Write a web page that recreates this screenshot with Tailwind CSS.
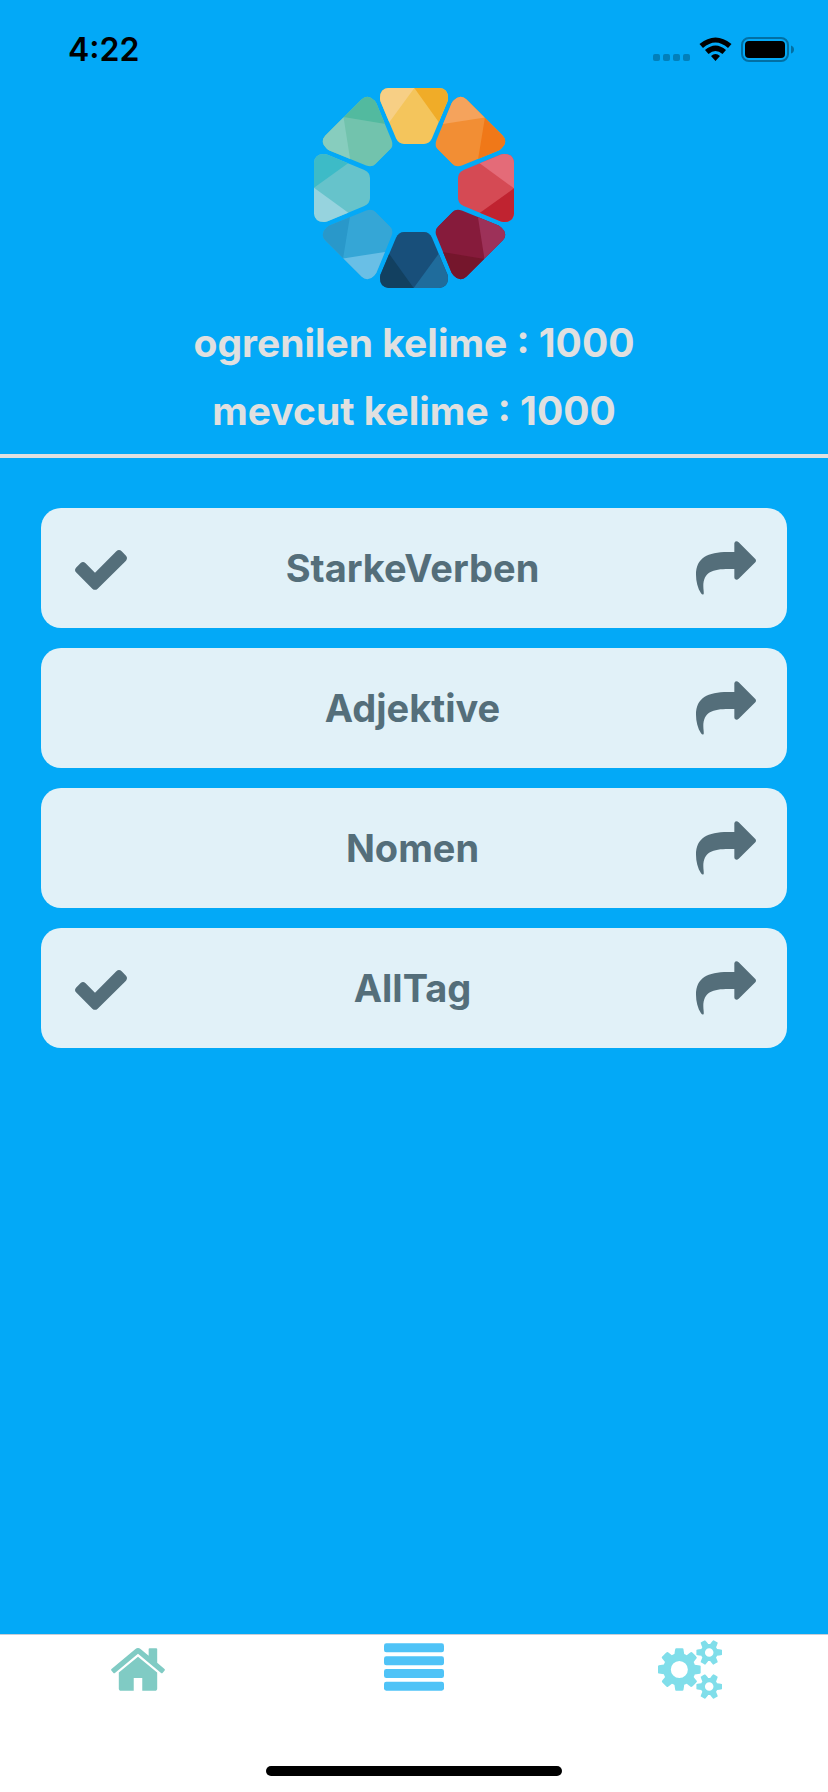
<!DOCTYPE html>
<html lang="tr">
<head>
<meta charset="utf-8">
<meta name="viewport" content="width=device-width, initial-scale=1">
<title>Kelime</title>
<script src="https://cdn.jsdelivr.net/npm/@tailwindcss/browser@4"></script>
</head>
<body class="flex min-h-screen flex-col bg-[#03a9f7] font-['Inter',sans-serif]">
<svg class="hidden" aria-hidden="true">
  <symbol id="check" viewBox="0 0 156 120"><path d="M60 68L124 4Q132-4 140 4L153 17Q159 24 153 32L68 116Q60 123 52 116L3 67Q-3 60 3 53L17 39Q24 33 31 39Z"/></symbol>
  <symbol id="share" viewBox="0 0 180 160"><path d="M115 32V6Q116 0 121 0Q125 0 128 3L178 53Q182 58 178 63L128 112Q122 118 117 113Q115 111 115 108V83H98C50 83 22 92 22 135C22 145 24 152 23 158Q20 162 15 156C5 140 0 120 0 100C0 50 35 32 95 32Z"/></symbol>
</svg>

<div class="flex h-22 items-center justify-between pr-8 pl-17">
  <time class="mt-3 text-[32px] leading-6 font-semibold text-black">4:22</time>
  <svg class="mt-3 h-7 w-36" viewBox="0 0 144 28" aria-hidden="true">
    <g fill="#027fba"><rect x="1" y="18" width="7" height="7" rx="2"/><rect x="11" y="18" width="7" height="7" rx="2"/><rect x="21" y="18" width="7" height="7" rx="2"/><rect x="31" y="18" width="7" height="7" rx="2"/></g>
    <path d="M47.500 8Q63.500-5 79.500 8L76 12Q63.500 1 51 12ZM53 14Q63.500 5 74 14L70.500 18Q63.500 12 56.500 18ZM59 20Q63.500 16 68 20L63.500 25Z"/>
    <rect x="90" y="2" width="46" height="23" rx="7" fill="none" stroke="#026fa3" stroke-width="2"/>
    <rect x="93" y="5" width="40" height="17" rx="4"/>
    <path d="M139 9.500Q142 10.500 142 13.500T139 17.500Z" fill="#026fa3"/>
  </svg>
</div>

<header class="flex flex-col items-center border-b-4 border-[#e0e0e0] pb-[9px] text-center text-[39px] leading-17 font-bold text-[#e0e0e0]">
  <svg class="mb-[21px] size-50" viewBox="0 0 600 600" role="img" aria-label="Logo">
    <clipPath id="petal"><path d="M224 0H376Q402 2 402 30Q402 36 400 41L354 151Q346 168 330 168H270Q254 168 246 151L200 41Q198 36 198 30Q198 2 224 0Z"/></clipPath>
    <g clip-path="url(#petal)"><path fill="#f4c55c" d="M190 0H410V170H190Z"/><path fill="#f7cf85" d="M301 0L190 152V0Z"/><path fill="#f0ac28" d="M301 0L410 152V0Z"/></g>
    <g transform="rotate(45 300 300)"><g clip-path="url(#petal)"><path fill="#f28e34" d="M190 0H410V170H190Z"/><path fill="#f5a35c" d="M301 0L190 152V0Z"/><path fill="#f07818" d="M301 0L410 152V0Z"/></g></g>
    <g transform="rotate(90 300 300)"><g clip-path="url(#petal)"><path fill="#d54a54" d="M190 0H410V170H190Z"/><path fill="#e46b78" d="M301 0L190 152V0Z"/><path fill="#c02330" d="M301 0L410 152V0Z"/></g></g>
    <g transform="rotate(135 300 300)"><g clip-path="url(#petal)"><path fill="#861b3b" d="M190 0H410V170H190Z"/><path fill="#9d3159" d="M301 0L190 152V0Z"/><path fill="#75162c" d="M301 0L410 152V0Z"/></g></g>
    <g transform="rotate(180 300 300)"><g clip-path="url(#petal)"><path fill="#184f7a" d="M190 0H410V170H190Z"/><path fill="#1f6c9c" d="M301 0L190 152V0Z"/><path fill="#124060" d="M301 0L410 152V0Z"/></g></g>
    <g transform="rotate(225 300 300)"><g clip-path="url(#petal)"><path fill="#35a6d6" d="M190 0H410V170H190Z"/><path fill="#69bfe6" d="M301 0L190 152V0Z"/><path fill="#2998ca" d="M301 0L410 152V0Z"/></g></g>
    <g transform="rotate(270 300 300)"><g clip-path="url(#petal)"><path fill="#66c3cb" d="M190 0H410V170H190Z"/><path fill="#96d3de" d="M301 0L190 152V0Z"/><path fill="#3dbbc7" d="M301 0L410 152V0Z"/></g></g>
    <g transform="rotate(315 300 300)"><g clip-path="url(#petal)"><path fill="#72c3ad" d="M190 0H410V170H190Z"/><path fill="#87cdbe" d="M301 0L190 152V0Z"/><path fill="#52ba9f" d="M301 0L410 152V0Z"/></g></g>
  </svg>
  <p>ogrenilen kelime : 1000</p>
  <p>mevcut kelime : 1000</p>
</header>

<main class="flex-1 px-[41px] py-[50px]">
  <ul class="flex flex-col gap-5 text-[38px] font-bold text-[#546e7a]">
    <li><button type="button" class="grid h-30 w-full grid-cols-[88px_1fr_91px] items-center rounded-[20px] bg-[#e1f1f8]"><svg class="mt-1 ml-[34px] h-10 w-[52px] fill-current" aria-label="Seçili"><use href="#check"/></svg><span>StarkeVerben</span><svg class="h-[54px] w-15 fill-current" aria-hidden="true"><use href="#share"/></svg></button></li>
    <li><button type="button" class="grid h-30 w-full grid-cols-[88px_1fr_91px] items-center rounded-[20px] bg-[#e1f1f8]"><span></span><span>Adjektive</span><svg class="h-[54px] w-15 fill-current" aria-hidden="true"><use href="#share"/></svg></button></li>
    <li><button type="button" class="grid h-30 w-full grid-cols-[88px_1fr_91px] items-center rounded-[20px] bg-[#e1f1f8]"><span></span><span>Nomen</span><svg class="h-[54px] w-15 fill-current" aria-hidden="true"><use href="#share"/></svg></button></li>
    <li><button type="button" class="grid h-30 w-full grid-cols-[88px_1fr_91px] items-center rounded-[20px] bg-[#e1f1f8]"><svg class="mt-1 ml-[34px] h-10 w-[52px] fill-current" aria-label="Seçili"><use href="#check"/></svg><span>AllTag</span><svg class="h-[54px] w-15 fill-current" aria-hidden="true"><use href="#share"/></svg></button></li>
  </ul>
</main>

<footer class="border-t border-[#c7cdd6] bg-white pt-1 pb-4">
  <nav class="grid grid-cols-3">
    <a href="#home" aria-label="Ana sayfa" class="flex h-15 items-center justify-center text-[#80cbc4]">
      <svg class="h-[43px] w-[54px] fill-current" viewBox="25 250 1614 1290"><path d="M1408 992v480q0 26-19 45t-45 19h-384v-384h-256v384h-384q-26 0-45-19t-19-45v-480q0-1 .5-3t.5-3l575-474 575 474q1 2 1 6zm223-69l-62 74q-8 9-21 11h-3q-13 0-21-7l-692-577-692 577q-12 8-24 7-13-2-21-11l-62-74q-8-10-7-23.500t11-21.500l719-599q32-26 76-26t76 26l244 204v-195q0-14 9-23t23-9h192q14 0 23 9t9 23v408l219 182q10 8 11 21.500t-7 23.500z"/></svg>
    </a>
    <a href="#list" aria-label="Liste" class="flex h-15 items-center justify-center text-[#4fc3f7]">
      <svg class="mb-1 h-12 w-15 fill-current" viewBox="0 0 180 144"><rect y="1" width="180" height="27" rx="7"/><rect y="40" width="180" height="27" rx="7"/><rect y="78" width="180" height="27" rx="7"/><rect y="116" width="180" height="27" rx="7"/></svg>
    </a>
    <a href="#settings" aria-label="Ayarlar" class="flex h-15 items-center justify-center text-[#80deea]">
      <svg class="h-[59px] w-16 fill-current" viewBox="0 16 1920 1760"><path d="M896 896q0-106-75-181t-181-75-181 75-75 181 75 181 181 75 181-75 75-181zm768 512q0-52-38-90t-90-38-90 38-38 90q0 53 37.500 90.500t90.500 37.500 90.500-37.500 37.500-90.500zm0-1024q0-52-38-90t-90-38-90 38-38 90q0 53 37.500 90.500t90.500 37.500 90.500-37.500 37.500-90.500zm-384 421v185q0 10-7 19.500t-16 10.500l-155 24q-11 35-32 76 34 48 90 115 7 11 7 20 0 12-7 19-23 30-82.500 89.500t-78.500 59.500q-11 0-21-7l-115-90q-37 19-77 31-11 108-23 155-7 24-30 24h-186q-11 0-20-7.500t-10-17.500l-23-153q-34-10-75-31l-118 89q-7 7-20 7-11 0-21-8-144-133-144-160 0-9 7-19 10-14 41-53t47-61q-23-44-35-82l-152-24q-10-1-17-9.500t-7-19.500v-185q0-10 7-19.500t16-10.500l155-24q11-35 32-76-34-48-90-115-7-11-7-20 0-12 7-20 22-30 82-89t79-59q11 0 21 7l115 90q34-18 77-32 11-108 23-154 7-24 30-24h186q11 0 20 7.500t10 17.500l23 153q34 10 75 31l118-89q8-7 20-7 11 0 21 8 144 133 144 160 0 8-7 19-12 16-42 54t-45 60q23 48 34 82l152 23q10 2 17 10.500t7 19.500zm640 533v140q0 16-149 31-12 27-30 52 51 113 51 138 0 4-4 7-122 71-124 71-8 0-46-47t-52-68q-20 2-30 2t-30-2q-14 21-52 68t-46 47q-2 0-124-71-4-3-4-7 0-25 51-138-18-25-30-52-149-15-149-31v-140q0-16 149-31 13-29 30-52-51-113-51-138 0-4 4-7 4-2 35-20t59-34 30-16q8 0 46 46.500t52 67.500q20-2 30-2t30 2q51-71 92-112l6-2q4 0 124 70 4 3 4 7 0 25-51 138 17 23 30 52 149 15 149 31zm0-1024v140q0 16-149 31-12 27-30 52 51 113 51 138 0 4-4 7-122 71-124 71-8 0-46-47t-52-68q-20 2-30 2t-30-2q-14 21-52 68t-46 47q-2 0-124-71-4-3-4-7 0-25 51-138-18-25-30-52-149-15-149-31v-140q0-16 149-31 13-29 30-52-51-113-51-138 0-4 4-7 4-2 35-20t59-34 30-16q8 0 46 46.500t52 67.500q20-2 30-2t30 2q51-71 92-112l6-2q4 0 124 70 4 3 4 7 0 25-51 138 17 23 30 52 149 15 149 31z"/></svg>
    </a>
  </nav>
  <div class="mx-auto mt-[67px] h-[10px] w-[296px] rounded-full bg-black"></div>
</footer>
</body>
</html>
